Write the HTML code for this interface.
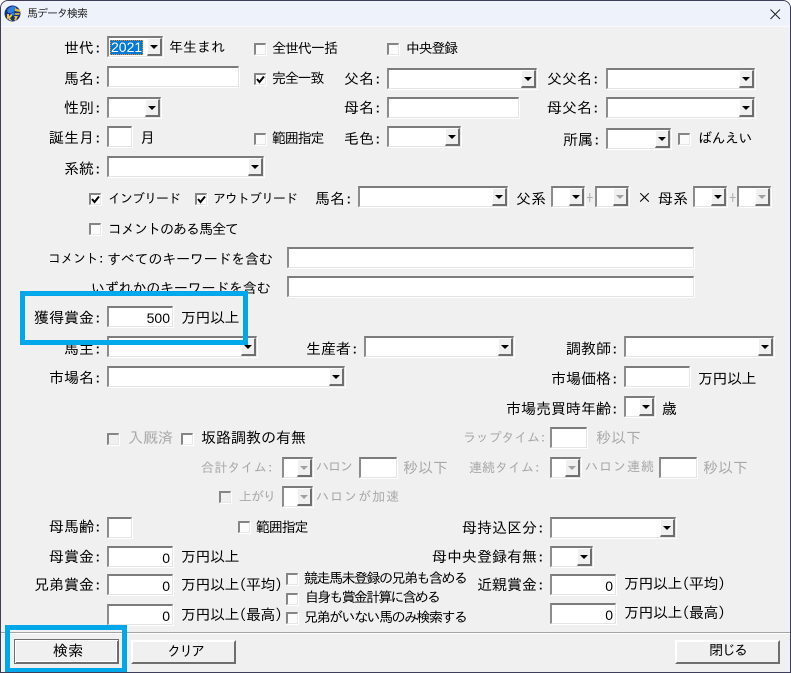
<!DOCTYPE html>
<html lang="ja"><head><meta charset="utf-8"><title>馬データ検索</title>
<style>
html,body{margin:0;padding:0;background:#fff}
#w{position:relative;width:791px;height:673px;overflow:hidden;background:#f0f0f0;box-sizing:border-box;border:1px solid #3e3e5a;border-top-left-radius:8px;border-top-right-radius:8px}
#c{position:absolute;left:-1px;top:-1px;width:791px;height:673px}
#tb{position:absolute;left:1px;top:1px;width:789px;height:25px;background:#eef3fb;border-bottom:1px solid #fafafa;border-top-left-radius:7px;border-top-right-radius:7px}
.t{position:absolute;white-space:nowrap;font-family:"IPAGothic","Noto Sans CJK JP",sans-serif;font-size:15px;line-height:16px;color:#000;letter-spacing:0}
.m{font-size:14px}
.n{font-size:14px;letter-spacing:0}
.s{font-size:14px;letter-spacing:-.2px}
.k{font-size:13px;letter-spacing:-1px}
.g{color:#a8a8a8}
.f{position:absolute;box-sizing:border-box;background:#fff;border-top:2px solid #7c7c7c;border-left:2px solid #8c8c8c;border-right:1px solid #e4e4e4;border-bottom:1px solid #e4e4e4;box-shadow:1px 1px 0 #fff;height:21px}
.b{position:absolute;right:0;top:0;width:15px;height:18px;box-sizing:border-box;background:#f0f0f0;border-top:1px solid #fff;border-left:1px solid #fff;border-right:2px solid #6e6e6e;border-bottom:2px solid #6e6e6e}
.b:after{content:"";position:absolute;left:2px;top:6px;border-left:4px solid transparent;border-right:4px solid transparent;border-top:4px solid #000}
.d:after{border-top-color:#a0a0a0}
.x{position:absolute;box-sizing:border-box;width:12px;height:12px;background:#fbfbfb;border-top:2px solid #858585;border-left:2px solid #858585;border-right:1px solid #e6e6e6;border-bottom:1px solid #e6e6e6;box-shadow:1px 1px 0 #fff}
.dis{background:#f0f0f0}
.x svg{position:absolute;left:0;top:0}
.v{position:absolute;right:2px;top:2px;font-family:"Liberation Sans",sans-serif;font-size:14px;line-height:16px;color:#000}
.o{position:absolute;box-sizing:border-box;background:#f0f0f0;border-top:2px solid #fff;border-left:2px solid #fff;border-right:2px solid #6e6e6e;border-bottom:2px solid #6e6e6e;height:24px;width:105px;top:640px}
.h{position:absolute;box-sizing:border-box;border:5px solid #00a8ea}
#sep{position:absolute;left:1px;top:632px;width:789px;height:1px;background:#a4a4a4;border-bottom:1px solid #fff}
</style></head><body>
<div id="w"><div id="c">
<div id="tb"></div>
<svg style="position:absolute;left:4px;top:5px" width="17" height="17" viewBox="0 0 17 17"><circle cx="8.500" cy="8.500" r="8" fill="#14307e"/><path d="M3 5 Q7 0 12 2 L11 6 L7 8 L4 8 Z" fill="#2f7fdc"/><path d="M6 9 L10 7 L11 10 L7 11 Z" fill="#2f7fdc"/><path d="M11 3 L16 5 L16 7 L11 6 Z" fill="#e8b828"/><path d="M11 8 L16 8 L15 10 L11 10 Z" fill="#c8a040"/><path d="M3 9 L5 9 L5 11 L8 9 L8 11 L6 13 L8 16 L5 15 L4 13 L3 15 Z" fill="#efc83a"/><path d="M10 11 L14 11 L13 13 L12 16 L10 15 L11 13 Z" fill="#e8c040"/></svg>
<div class="t" style="left:27px;top:6px;font-size:11px;letter-spacing:-1px;color:#222">馬データ検索</div>
<svg style="position:absolute;left:770px;top:9px" width="11" height="11" viewBox="0 0 11 11"><path d="M.5 .5L10 10M10 .5L.5 10" stroke="#222" stroke-width="1" fill="none"/></svg>

<div class="f" style="left:107px;top:36px;width:56px"><div class="b"></div></div>
<div style="position:absolute;left:110px;top:40px;width:33px;height:15px;box-sizing:border-box;background:#0078d7;border:1px dotted #f08a20;color:#fff;font:14px/13px 'Liberation Sans',sans-serif">2021</div>
<div class="f" style="left:107px;top:66px;width:132px"></div>
<div class="f" style="left:107px;top:97px;width:54px"><div class="b"></div></div>
<div class="f" style="left:107px;top:126px;width:25px"></div>
<div class="f" style="left:107px;top:156px;width:157px"><div class="b"></div></div>
<div class="f" style="left:358px;top:186px;width:150px"><div class="b"></div></div>
<div class="f" style="left:387px;top:68px;width:150px"><div class="b"></div></div>
<div class="f" style="left:387px;top:97px;width:132px"></div>
<div class="f" style="left:387px;top:126px;width:74px"><div class="b"></div></div>
<div class="f" style="left:606px;top:68px;width:149px"><div class="b"></div></div>
<div class="f" style="left:606px;top:97px;width:149px"><div class="b"></div></div>
<div class="f" style="left:606px;top:128px;width:65px"><div class="b"></div></div>
<div class="f" style="left:551px;top:186px;width:34px"><div class="b"></div></div>
<div class="f" style="left:595px;top:186px;width:34px"><div class="b d"></div></div>
<div class="f" style="left:693px;top:186px;width:34px"><div class="b"></div></div>
<div class="f" style="left:737px;top:186px;width:34px"><div class="b d"></div></div>
<div class="f" style="left:287px;top:247px;width:407px"></div>
<div class="f" style="left:287px;top:276px;width:407px"></div>
<div class="f" style="left:107px;top:306px;width:66px"><div class="v">500</div></div>
<div class="f" style="left:107px;top:336px;width:150px"><div class="b"></div></div>
<div class="f" style="left:364px;top:336px;width:150px"><div class="b"></div></div>
<div class="f" style="left:624px;top:336px;width:150px"><div class="b"></div></div>
<div class="f" style="left:107px;top:366px;width:238px"><div class="b"></div></div>
<div class="f" style="left:624px;top:366px;width:66px"></div>
<div class="f" style="left:624px;top:396px;width:31px"><div class="b"></div></div>
<div class="f" style="left:550px;top:427px;width:37px"></div>
<div class="f" style="left:282px;top:457px;width:31px"><div class="b d"></div></div>
<div class="f" style="left:359px;top:457px;width:38px"></div>
<div class="f" style="left:550px;top:457px;width:31px"><div class="b d"></div></div>
<div class="f" style="left:659px;top:457px;width:38px"></div>
<div class="f" style="left:282px;top:486px;width:31px"><div class="b d"></div></div>
<div class="f" style="left:107px;top:517px;width:25px"></div>
<div class="f" style="left:550px;top:517px;width:126px"><div class="b"></div></div>
<div class="f" style="left:107px;top:546px;width:66px"><div class="v">0</div></div>
<div class="f" style="left:550px;top:546px;width:43px"><div class="b"></div></div>
<div class="f" style="left:107px;top:574px;width:66px"><div class="v">0</div></div>
<div class="f" style="left:107px;top:604px;width:66px"><div class="v">0</div></div>
<div class="f" style="left:550px;top:574px;width:66px"><div class="v">0</div></div>
<div class="f" style="left:550px;top:603px;width:66px"><div class="v">0</div></div>

<div class="x" style="left:254px;top:43px"></div>
<div class="x" style="left:387px;top:43px"></div>
<div class="x" style="left:254px;top:73px;background:#fff"><svg width="10" height="10" viewBox="0 0 10 10"><path d="M1 4L3.500 7L8 1.500" stroke="#000" stroke-width="2" fill="none"/></svg></div>
<div class="x" style="left:254px;top:133px"></div>
<div class="x" style="left:678px;top:133px"></div>
<div class="x" style="left:89px;top:193px;background:#fff"><svg width="10" height="10" viewBox="0 0 10 10"><path d="M1 4L3.500 7L8 1.500" stroke="#000" stroke-width="2" fill="none"/></svg></div>
<div class="x" style="left:195px;top:193px;background:#fff"><svg width="10" height="10" viewBox="0 0 10 10"><path d="M1 4L3.500 7L8 1.500" stroke="#000" stroke-width="2" fill="none"/></svg></div>
<div class="x" style="left:89px;top:223px"></div>
<div class="x dis" style="left:107px;top:433px"></div>
<div class="x" style="left:181px;top:433px"></div>
<div class="x dis" style="left:219px;top:491px"></div>
<div class="x" style="left:238px;top:521px"></div>
<div class="x" style="left:286px;top:573px"></div>
<div class="x" style="left:286px;top:593px"></div>
<div class="x" style="left:286px;top:612px"></div>

<div class="t" style="left:64px;top:40px">世代:</div>
<div class="t n" style="left:169px;top:39px">年生まれ</div>
<div class="t m" style="left:272px;top:40px;letter-spacing:-1px">全世代一括</div>
<div class="t m" style="left:406px;top:40px;letter-spacing:-1.300px">中央登録</div>
<div class="t" style="left:64px;top:71px">馬名:</div>
<div class="t m" style="left:272px;top:70px;letter-spacing:-1.200px">完全一致</div>
<div class="t" style="left:344px;top:71px">父名:</div>
<div class="t" style="left:547px;top:71px">父父名:</div>
<div class="t" style="left:64px;top:100px">性別:</div>
<div class="t" style="left:344px;top:100px">母名:</div>
<div class="t" style="left:547px;top:100px">母父名:</div>
<div class="t" style="left:49px;top:130px">誕生月:</div>
<div class="t" style="left:140px;top:130px">月</div>
<div class="t m" style="left:272px;top:130px;letter-spacing:-1.200px">範囲指定</div>
<div class="t" style="left:344px;top:131px">毛色:</div>
<div class="t" style="left:563px;top:132px">所属:</div>
<div class="t m" style="left:698px;top:130px;letter-spacing:-.500px">ばんえい</div>
<div class="t" style="left:64px;top:161px">系統:</div>
<div class="t k" style="left:108px;top:191px">インブリード</div>
<div class="t k" style="left:213px;top:191px">アウトブリード</div>
<div class="t" style="left:315px;top:191px">馬名:</div>
<div class="t" style="left:516px;top:191px">父系</div>
<div class="t n" style="left:586px;top:190px;color:#b0b0b0;font-size:15px">+</div>
<div class="t" style="left:637px;top:190px">×</div>
<div class="t" style="left:658px;top:191px">母系</div>
<div class="t n" style="left:729px;top:190px;color:#b0b0b0;font-size:15px">+</div>
<div class="t m" style="left:108px;top:221px;letter-spacing:-1px">コメントのある馬全て</div>
<div class="t k" style="left:48px;top:251px;letter-spacing:-.500px">コメント:</div>
<div class="t s" style="left:107px;top:251px">すべてのキーワードを含む</div>
<div class="t s" style="left:91px;top:280px">いずれかのキーワードを含む</div>
<div class="t" style="left:34px;top:310px">獲得賞金:</div>
<div class="t" style="left:181px;top:310px;letter-spacing:-.500px">万円以上</div>
<div class="t" style="left:64px;top:341px">馬主:</div>
<div class="t" style="left:306px;top:341px">生産者:</div>
<div class="t" style="left:566px;top:341px">調教師:</div>
<div class="t" style="left:49px;top:370px">市場名:</div>
<div class="t" style="left:551px;top:371px">市場価格:</div>
<div class="t" style="left:698px;top:371px;letter-spacing:-.500px">万円以上</div>
<div class="t" style="left:506px;top:401px">市場売買時年齢:</div>
<div class="t" style="left:662px;top:401px">歳</div>
<div class="t g" style="left:128px;top:430px">入厩済</div>
<div class="t" style="left:201px;top:430px">坂路調教の有無</div>
<div class="t k g" style="left:463px;top:430px;letter-spacing:-.200px">ラップタイム:</div>
<div class="t g" style="left:596px;top:430px">秒以下</div>
<div class="t k g" style="left:201px;top:460px;letter-spacing:.200px">合計タイム:</div>
<div class="t k g" style="left:316px;top:459px">ハロン</div>
<div class="t g" style="left:403px;top:460px">秒以下</div>
<div class="t k g" style="left:469px;top:460px;letter-spacing:0">連続タイム:</div>
<div class="t k g" style="left:585px;top:459px;letter-spacing:1px">ハロン連続</div>
<div class="t g" style="left:703px;top:460px">秒以下</div>
<div class="t k g" style="left:239px;top:489px">上がり</div>
<div class="t k g" style="left:316px;top:489px;letter-spacing:1px">ハロンが加速</div>
<div class="t" style="left:49px;top:519px">母馬齢:</div>
<div class="t m" style="left:256px;top:519px;letter-spacing:-1.200px">範囲指定</div>
<div class="t" style="left:462px;top:520px">母持込区分:</div>
<div class="t" style="left:49px;top:549px">母賞金:</div>
<div class="t" style="left:181px;top:549px;letter-spacing:-.500px">万円以上</div>
<div class="t" style="left:432px;top:549px">母中央登録有無:</div>
<div class="t" style="left:34px;top:577px">兄弟賞金:</div>
<div class="t" style="left:181px;top:577px;letter-spacing:-.500px">万円以上(平均)</div>
<div class="t" style="left:181px;top:607px;letter-spacing:-.500px">万円以上(最高)</div>
<div class="t m" style="left:304px;top:570px;letter-spacing:-1.500px">競走馬未登録の兄弟も含める</div>
<div class="t m" style="left:305px;top:589px;letter-spacing:-1.800px">自身も賞金計算に含める</div>
<div class="t m" style="left:304px;top:609px;letter-spacing:-1.500px">兄弟がいない馬のみ検索する</div>
<div class="t" style="left:477px;top:577px">近親賞金:</div>
<div class="t" style="left:624px;top:576px;letter-spacing:-.500px">万円以上(平均)</div>
<div class="t" style="left:624px;top:605px;letter-spacing:-.500px">万円以上(最高)</div>

<div id="sep"></div>
<div class="o" style="left:14px;top:639px;height:25px;border:1px solid #6e6e6e;box-shadow:inset 1px 1px 0 #fff,inset -1px -1px 0 #6e6e6e,inset -2px -2px 0 #fff"></div>
<div class="o" style="left:131px"></div>
<div class="o" style="left:675px"></div>
<div class="t" style="left:53px;top:643px">検索</div>
<div class="t m" style="left:167px;top:643px;letter-spacing:-2px">クリア</div>
<div class="t m" style="left:709px;top:642px;letter-spacing:-1.500px">閉じる</div>

<div class="h" style="left:20px;top:291px;width:228px;height:54px"></div>
<div class="h" style="left:5px;top:625px;width:122px;height:48px"></div>
</div></div>
</body></html>
